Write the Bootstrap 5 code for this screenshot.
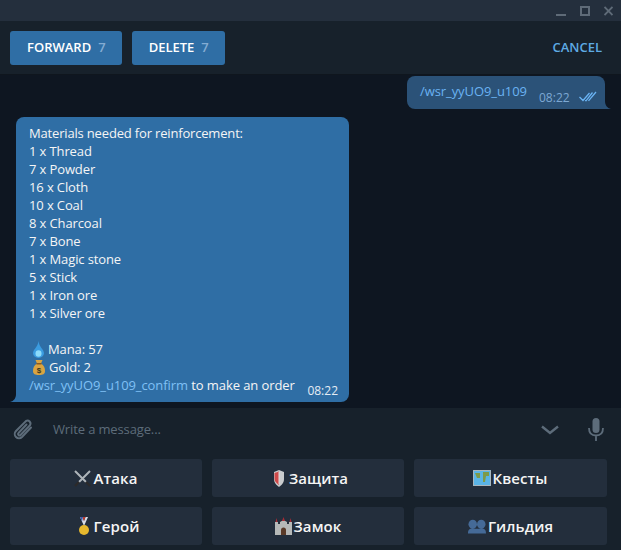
<!DOCTYPE html>
<html lang="en"><head><meta charset="utf-8"><title>Telegram</title>
<link href="https://cdn.jsdelivr.net/npm/bootstrap@5.3.0/dist/css/bootstrap.min.css" rel="stylesheet">
<style>
html,body{height:550px;overflow:hidden;background:#0e1621}
body{font-family:"Open Sans",sans-serif;font-size:13px;color:#f5f5f5;width:621px}
.tg-title{height:21px;background:#242f3d;padding-right:8px;gap:14px}
.tg-title svg{display:block}
.tg-head{height:54px;background:#17212b;padding:10px 19px 10px 10px;border-bottom:1px solid #0f161e;gap:10px}
.tg-act{height:34px;background:#2f6ea5;border-radius:3px;color:#fff;font-weight:600;font-size:13px;padding:0 16px 0 17px;gap:7px;border:0}
.tg-act span{color:#84acd3}
.tg-cancel{color:#5eaae3;font-weight:600;font-size:13px}
.tg-msgs{height:333px;background:#0e1621;padding:1px 10px 0 16px}
.tg-out{width:198px;height:33px;background:#2b5278;border-radius:8px 8px 0 8px;margin-right:6px;padding:6px 0 0 13px;position:relative;color:#6ab3f3;margin-bottom:8px;letter-spacing:-.08px}
.tg-tail-o{position:absolute;right:-6px;bottom:0}
.tg-tail-i{position:absolute;left:-6px;bottom:0}
.tg-time{position:absolute;color:#7da8d3;font-size:12px;line-height:16px;letter-spacing:0}
.tg-in{width:333px;height:285px;background:#2f6ea5;border-radius:8px 8px 8px 0;position:relative;padding:7px 13px 0;line-height:18px;white-space:nowrap;letter-spacing:-.12px}
.tg-in a{color:#7fc0f5;text-decoration:none}
.tg-in .tg-time{right:11px;bottom:3px;color:#e4ecf4}
.tg-em{display:block;margin-left:4px;flex:none}
.tg-line{height:18px}
.tg-first{letter-spacing:-.17px}
.tg-last{letter-spacing:-.08px}
.tg-compose{height:43px;background:#17212b;padding:0 17px 0 11px}
.tg-ph{color:#5d6c7a;font-size:13px;margin-left:18px;letter-spacing:-.13px}
.tg-kbd{height:99px;background:#17212b;padding:8px 14px 5px 10px;display:grid;grid-template-columns:192px 192px 193px;gap:10px;grid-auto-rows:38px}
.tg-key{background:#232e3c;border-radius:3px;color:#f5f5f5;font-weight:600;font-size:15px;gap:2px;letter-spacing:.1px}
.tg-key svg{display:block;flex:none}
.tg-g4{gap:4px}.tg-g5{gap:5px}.tg-g1{gap:1px}
</style></head><body>
<div class="tg-title d-flex justify-content-end align-items-center">
 <svg width="10" height="10" viewBox="0 0 10 10"><rect y="8" width="10" height="2" fill="#5f6b78"/></svg>
 <svg width="10" height="10" viewBox="0 0 10 10"><rect x="1" y="1" width="8" height="8" fill="none" stroke="#5f6b78" stroke-width="2"/></svg>
 <svg width="9" height="10" viewBox="0 0 9 10"><path d="M.5 1l8 8M8.500 1l-8 8" stroke="#5f6b78" stroke-width="1.800"/></svg>
</div>
<div class="tg-head d-flex align-items-center">
 <button class="btn tg-act d-flex align-items-center">FORWARD <span>7</span></button>
 <button class="btn tg-act d-flex align-items-center">DELETE <span>7</span></button>
 <div class="tg-cancel ms-auto">CANCEL</div>
</div>
<div class="tg-msgs">
 <div class="d-flex justify-content-end">
  <div class="tg-out">/wsr_yyUO9_u109
   <span class="tg-time" style="left:132px;top:14px">08:22</span>
   <svg style="position:absolute;left:172px;top:15px" width="18" height="11" viewBox="0 0 18 11" fill="none" stroke="#6ab3f3" stroke-width="1.300"><path d="M.5 6l3.500 3.500L10.500 2M6 9.500l1 .3L13.500 1.500M9.500 9.800L17 1"/></svg>
   <svg class="tg-tail-o" width="6" height="8" viewBox="0 0 6 8"><path d="M0 0C0 4 2 7 6 8H0Z" fill="#2b5278"/></svg>
  </div>
 </div>
 <div class="tg-in">
  <div class="tg-line tg-first">Materials needed for reinforcement:</div>
  <div class="tg-line">1 x Thread</div><div class="tg-line">7 x Powder</div><div class="tg-line">16 x Cloth</div><div class="tg-line">10 x Coal</div><div class="tg-line">8 x Charcoal</div><div class="tg-line">7 x Bone</div><div class="tg-line">1 x Magic stone</div><div class="tg-line">5 x Stick</div><div class="tg-line">1 x Iron ore</div><div class="tg-line">1 x Silver ore</div>
  <div class="tg-line"></div>
  <div class="tg-line d-flex align-items-center"><svg class="tg-em me-1" width="11" height="17" viewBox="0 0 11 17"><path d="M5.500 0C6 6 11 8.500 11 12.300a5.500 4.700 0 0 1-11 0C0 8.500 5 6 5.500 0Z" fill="#3b9ce0"/><ellipse cx="5.500" cy="12.500" rx="3" ry="3.200" fill="#8ddcfb"/></svg>Mana: 57</div>
  <div class="tg-line d-flex align-items-center"><svg class="tg-em me-1" width="12" height="15" viewBox="0 0 12 15"><path d="M2.500 0h7L8 3.500C11 5 12 8 12 11c0 3-2 4-6 4s-6-1-6-4c0-3 1-6 4-7.500Z" fill="#d9a441"/><rect x="3.500" y="3" width="5" height="1.500" fill="#8a5a20"/><text x="6" y="13" font-size="8" font-weight="700" text-anchor="middle" fill="#3c3a20" font-family="Liberation Sans">$</text></svg>Gold: 2</div>
  <div class="tg-line tg-last"><a href="#">/wsr_yyUO9_u109_confirm</a> to make an order</div>
  <span class="tg-time">08:22</span>
  <svg class="tg-tail-i" width="6" height="8" viewBox="0 0 6 8"><path d="M6 0C6 4 4 7 0 8H6Z" fill="#2f6ea5"/></svg>
 </div>
</div>
<div class="tg-compose d-flex align-items-center">
 <svg width="24" height="24" viewBox="0 0 24 24" fill="none" stroke="#5d6c7a" stroke-width="2" stroke-linecap="round"><path d="M20 9.500l-9 9.500a4.200 4.200 0 0 1-6-6L15 3a3 3 0 0 1 4 4.200L9.500 17a1.300 1.300 0 0 1-2-2l8-8.500"/></svg>
 <div class="tg-ph">Write a message...</div>
 <svg class="ms-auto" width="18" height="10" viewBox="0 0 18 10" fill="none" stroke="#5d6c7a" stroke-width="2.400"><path d="M1 1.500l8 6.500 8-6.500"/></svg>
 <svg style="margin-left:29px" width="16" height="23" viewBox="0 0 16 23" fill="none"><rect x="4.500" y="0" width="7" height="15" rx="3.500" fill="#5d6c7a"/><path d="M1 10c0 5 3 7.500 7 7.500s7-2.500 7-7.500M8 17.500V23" stroke="#5d6c7a" stroke-width="1.800"/></svg>
</div>
<div class="tg-kbd">
 <div class="tg-key d-flex justify-content-center align-items-center"><svg width="17" height="17" viewBox="0 0 17 17" fill="none"><path d="M1 1l11 11M16 1L5 12" stroke="#aeb4b9" stroke-width="2"/><path d="M1 16l4-4M16 16l-4-4" stroke="#2c2a2a" stroke-width="2.400"/></svg>Атака</div>
 <div class="tg-key tg-g4 d-flex justify-content-center align-items-center"><svg width="17" height="17" viewBox="-5 0 17 17"><path d="M1 2l5-2 5 2v7c0 4-2.500 6-5 8-2.500-2-5-4-5-8Z" fill="#c9cbcd"/><path d="M1.500 3L6 1.500V15C3 13 1.500 11 1.500 9Z" fill="#cf4a4a"/><path d="M6 2v12" stroke="#e7d9d9"/></svg>Защита</div>
 <div class="tg-key tg-g1 d-flex justify-content-center align-items-center"><svg width="18" height="16" viewBox="0 0 18 16"><rect width="18" height="16" fill="#5ab4e6"/><path d="M2 3h5v5H4ZM10 2h6v4h-3l-1 6h-2Z" fill="#7d9a4a"/><path d="M.5.5h17v15H.5Z" fill="none" stroke="#a9b6bd"/></svg>Квесты</div>
 <div class="tg-key tg-g5 d-flex justify-content-center align-items-center"><svg width="16" height="18" viewBox="-6 0 16 18"><path d="M1 0l4 9 4-9H6.500L5 4 3.500 0Z" fill="#d6dbe6"/><path d="M3.500 0L5 4l1.500-4Z" fill="#c0392b"/><path d="M1 0l2 4.500L4 0Z" fill="#3d5aa8"/><circle cx="5" cy="13" r="5" fill="#e6b82e"/></svg>Герой</div>
 <div class="tg-key d-flex justify-content-center align-items-center"><svg width="17" height="18" viewBox="0 0 17 18"><path d="M0 5h3v2h2V5l3.500-2L12 5v2h2V5h3v13H0Z" fill="#b6b9b8"/><path d="M6 18v-5a2.500 2.500 0 0 1 5 0v5Z" fill="#5a3a28"/><path d="M7 4l1.500-4L10 4ZM.5 5l1-4 1 4ZM14.500 5l1-4 1 4Z" fill="#a62c35"/></svg>Замок</div>
 <div class="tg-key d-flex justify-content-center align-items-center"><svg width="18" height="15" viewBox="0 0 19 15" fill="#456a97"><circle cx="5" cy="5" r="4.500"/><circle cx="14" cy="5" r="4.500"/><path d="M0 15c0-4 1-5 5-6 3 1 3 1 4.500 1s2-0 4.500-1c4 1 5 2 5 6Z"/></svg>Гильдия</div>
</div>
</body></html>
